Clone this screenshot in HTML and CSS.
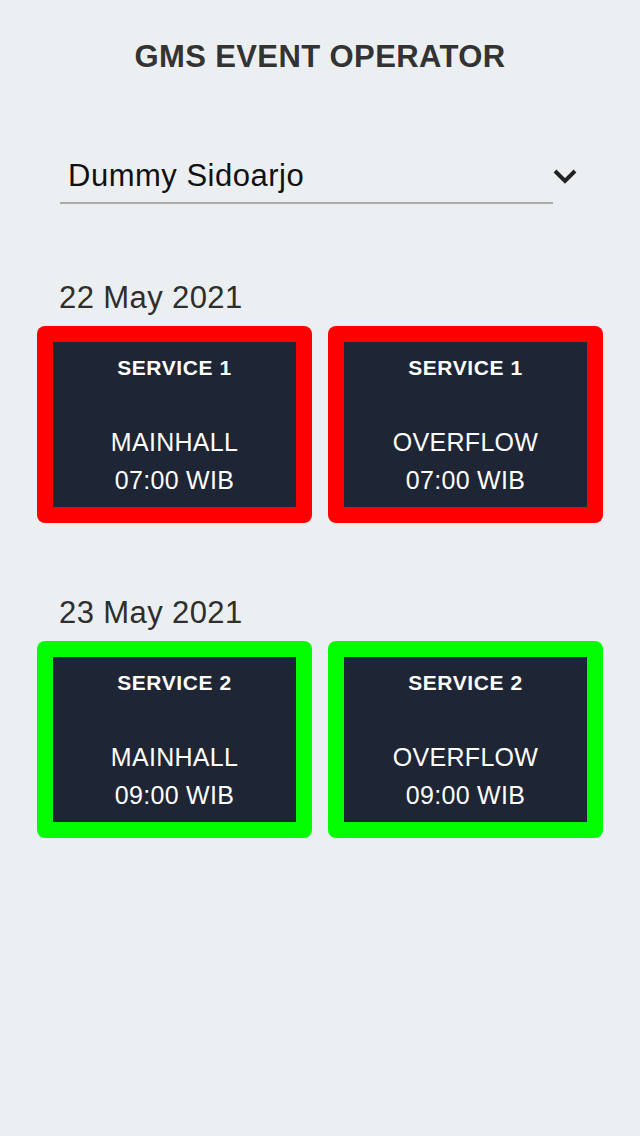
FILE: index.html
```html
<!DOCTYPE html>
<html lang="en">
<head>
<meta charset="utf-8">
<title>GMS Event Operator</title>
<link rel="stylesheet" href="styles.css">
</head>
<body>
<main class="page">
  <h1 class="title">GMS EVENT OPERATOR</h1>

  <div class="picker">
    <div class="picker-value">Dummy Sidoarjo</div>
    <div class="picker-icon">
      <svg width="24" height="17" viewBox="0 0 24 17" aria-hidden="true">
        <path d="M2 3 L12 13 L22 3" fill="none" stroke="#222" stroke-width="4" stroke-linecap="butt" stroke-linejoin="miter"/>
      </svg>
    </div>
  </div>

  <section class="day day-first">
    <h2 class="day-date">22 May 2021</h2>
    <div class="cards">
      <div class="card card-red">
        <div class="card-body">
          <div class="card-service">SERVICE 1</div>
          <div class="card-place">MAINHALL</div>
          <div class="card-time">07:00 WIB</div>
        </div>
      </div>
      <div class="card card-red">
        <div class="card-body">
          <div class="card-service">SERVICE 1</div>
          <div class="card-place">OVERFLOW</div>
          <div class="card-time">07:00 WIB</div>
        </div>
      </div>
    </div>
  </section>

  <section class="day">
    <h2 class="day-date">23 May 2021</h2>
    <div class="cards">
      <div class="card card-green">
        <div class="card-body">
          <div class="card-service">SERVICE 2</div>
          <div class="card-place">MAINHALL</div>
          <div class="card-time">09:00 WIB</div>
        </div>
      </div>
      <div class="card card-green">
        <div class="card-body">
          <div class="card-service">SERVICE 2</div>
          <div class="card-place">OVERFLOW</div>
          <div class="card-time">09:00 WIB</div>
        </div>
      </div>
    </div>
  </section>
</main>
</body>
</html>
```

FILE: styles.css
```css
* {
  box-sizing: border-box;
}

html, body {
  margin: 0;
  padding: 0;
}

body {
  background: #eceff1;
  font-family: "Liberation Sans", Arial, sans-serif;
  min-height: 1136px;
}

.page {
  display: flex;
  flex-direction: column;
  padding: 41px 37px 0;
}

.title {
  margin: 0;
  text-align: center;
  font-size: 31px;
  line-height: 31px;
  font-weight: bold;
  letter-spacing: 0.4px;
  color: #333333;
}

.picker {
  display: flex;
  align-items: flex-start;
  margin: 88px 23px 0 23px;
}

.picker-value {
  flex: 1;
  padding: 1px 0 11px 8px;
  font-size: 31px;
  line-height: 30px;
  letter-spacing: 0.5px;
  color: #111111;
  border-bottom: 2px solid #ababab;
}

.picker-icon {
  width: 27px;
  display: flex;
  justify-content: flex-start;
  padding-top: 8px;
}

.picker-icon svg {
  display: block;
}

.day {
  display: flex;
  flex-direction: column;
  margin-top: 75px;
}

.day-first {
  margin-top: 79px;
}

.day-date {
  margin: 0 0 13px 22px;
  font-size: 31px;
  line-height: 30px;
  font-weight: normal;
  letter-spacing: 0.4px;
  color: #2e2e2e;
}

.cards {
  display: grid;
  grid-template-columns: 1fr 1fr;
  gap: 16px;
}

.card {
  height: 197px;
  border-radius: 8px;
  padding: 16px;
}

.card-red {
  background: #ff0000;
}

.card-green {
  background: #00ff00;
}

.card-body {
  height: 100%;
  background: #1e2534;
  color: #ffffff;
  text-align: center;
  padding-top: 14px;
  display: flex;
  flex-direction: column;
}

.card-service {
  font-size: 21px;
  line-height: 24px;
  font-weight: bold;
  letter-spacing: 0.6px;
}

.card-place {
  margin-top: 43px;
  font-size: 25px;
  line-height: 38px;
  letter-spacing: 0.3px;
}

.card-time {
  font-size: 25px;
  line-height: 38px;
  letter-spacing: 0.3px;
}
```
